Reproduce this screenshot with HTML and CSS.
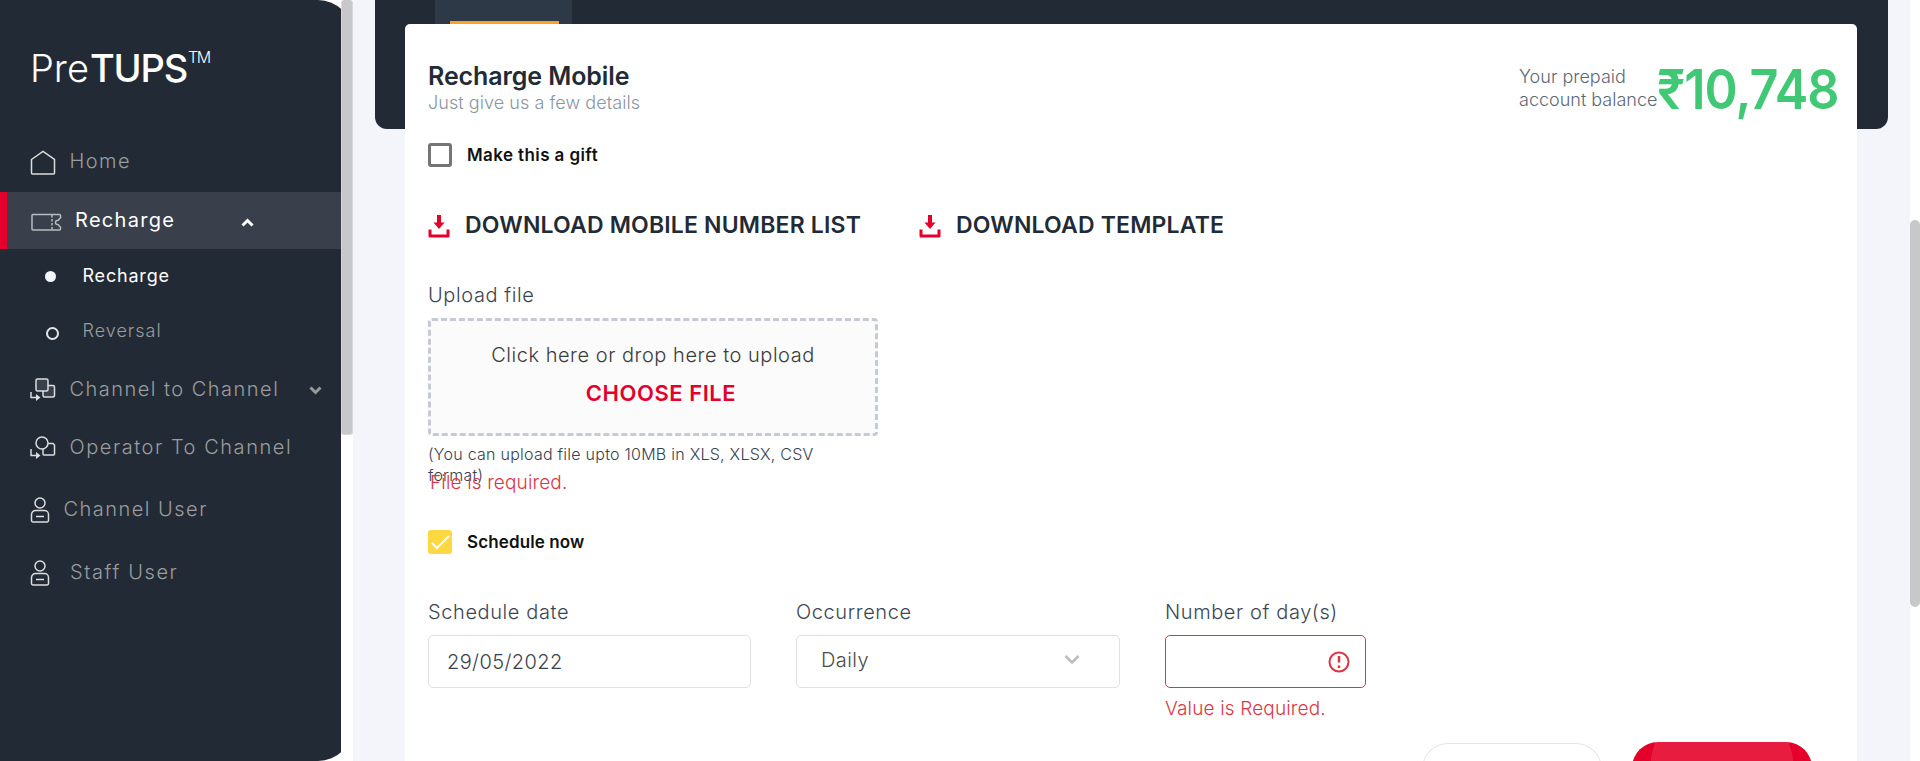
FILE: index.html
```html
<!DOCTYPE html>
<html lang="en">
<head>
<meta charset="utf-8">
<title>PreTUPS</title>
<link rel="stylesheet" href="styles.css">
</head>
<body>
<div class="app">
  <aside class="sidebar">
    <div class="panel">
      <div class="logo"><span class="logo-light">Pre</span><span class="logo-bold">TUPS</span><span class="logo-tm">TM</span></div>
      <nav class="nav">
        <a class="item home">
          <svg class="icon" width="26" height="26" viewBox="0 0 26 26"><path d="M1.5 9.5 13 1.5l11.500 8V23a1 1 0 0 1-1 1h-21a1 1 0 0 1-1-1z"/></svg>
          <span>Home</span>
        </a>
        <a class="item open">
          <svg class="icon" width="32" height="19" viewBox="0 0 32 19"><path d="M2 1.500h26.500a1 1 0 0 1 1 1v2.500l-1.500 1.200a1.500 1.500 0 0 1-1.500 1.300 2 2 0 0 0 0 4 1.500 1.500 0 0 1 1.500 1.300l1.500 1.200v2a1 1 0 0 1-1 1H2a1 1 0 0 1-1-1v-13.500a1 1 0 0 1 1-1z"/><path d="M21 2v15" stroke-dasharray="2.500 1.500"/></svg>
          <span>Recharge</span>
          <svg class="arrow up" width="13" height="9" viewBox="0 0 13 9"><path d="M1.500 7.500l5-5 5 5"/></svg>
        </a>
        <a class="item sub active"><i class="dot"></i><span>Recharge</span></a>
        <a class="item sub rev"><i class="ring"></i><span>Reversal</span></a>
        <a class="item c2c">
          <svg class="icon" width="26" height="24" viewBox="0 0 26 24"><rect class="tint" x="13" y="7.500" width="11.500" height="11.500" rx="1.500"/><rect class="tint" x="6" y="1" width="12" height="12" rx="1.500"/><path d="M1 14v5.500h7"/><path class="solid" d="M6 16l4.500 3.500L6 23z"/></svg>
          <span>Channel to Channel</span>
          <svg class="arrow down" width="13" height="9" viewBox="0 0 13 9"><path d="M1.500 1.500l5 5 5-5"/></svg>
        </a>
        <a class="item o2c">
          <svg class="icon" width="26" height="24" viewBox="0 0 26 24"><path d="M18 7.500h5l1.500 1.500v9a1 1 0 0 1-1 1h-9.500a1 1 0 0 1-1-1v-5"/><circle cx="12" cy="7" r="6"/><path d="M1 13v6.500h7"/><path class="solid" d="M6 16l4.500 3.500L6 23z"/></svg>
          <span>Operator To Channel</span>
        </a>
        <a class="item chu">
          <svg class="icon" width="21" height="27" viewBox="0 0 21 27"><circle cx="10" cy="6" r="5"/><path d="M5.500 13.500h9a4 4 0 0 1 4 4v6a1.500 1.500 0 0 1-1.500 1.500H3a1.500 1.500 0 0 1-1.500-1.500v-6a4 4 0 0 1 4-4zM6 19.500h8"/></svg>
          <span>Channel User</span>
        </a>
        <a class="item stu">
          <svg class="icon" width="21" height="27" viewBox="0 0 21 27"><circle cx="10" cy="6" r="5"/><path d="M5.500 13.500h9a4 4 0 0 1 4 4v6a1.500 1.500 0 0 1-1.500 1.500H3a1.500 1.500 0 0 1-1.500-1.500v-6a4 4 0 0 1 4-4zM6 19.500h8"/></svg>
          <span>Staff User</span>
        </a>
      </nav>
    </div>
    <div class="side-scroll"><div class="side-thumb"></div></div>
  </aside>
  <main class="main">
    <div class="banner"><div class="tab"><div class="tab-line"></div></div></div>
    <section class="card">
      <header class="head">
        <div class="titles">
          <h1 class="title">Recharge Mobile</h1>
          <p class="subtitle">Just give us a few details</p>
        </div>
        <div class="balance">
          <div class="balance-label">Your prepaid<br>account balance</div>
          <div class="amount">₹10,748</div>
        </div>
      </header>
      <label class="check gift"><span class="box"></span><span>Make this a gift</span></label>
      <div class="downloads">
        <a class="dl first"><svg width="22" height="24" viewBox="0 0 22 24"><path d="M9 0h4v7.500h3.500L11 14 5.500 7.500H9z"/><path class="tray" d="M2 14.500v6.500h18v-6.500"/></svg><span>DOWNLOAD MOBILE NUMBER LIST</span></a>
        <a class="dl"><svg width="22" height="24" viewBox="0 0 22 24"><path d="M9 0h4v7.500h3.500L11 14 5.500 7.500H9z"/><path class="tray" d="M2 14.500v6.500h18v-6.500"/></svg><span>DOWNLOAD TEMPLATE</span></a>
      </div>
      <div class="label upload-label">Upload file</div>
      <div class="drop">
        <div class="drop-text">Click here or drop here to upload</div>
        <div class="choose">CHOOSE FILE</div>
      </div>
      <div class="note">(You can upload file upto 10MB in XLS, XLSX, CSV<br>format)</div>
      <div class="error file-error">File is required.</div>
      <label class="check sched"><span class="box on"><svg width="24" height="24" viewBox="0 0 24 24"><path d="M4 13l5 5L21 6"/></svg></span><span>Schedule now</span></label>
      <div class="fields">
        <div class="field"><div class="label">Schedule date</div><div class="input date">29/05/2022</div></div>
        <div class="field occurrence"><div class="label">Occurrence</div><div class="input select"><span>Daily</span><svg width="16" height="11" viewBox="0 0 16 11"><path d="M1.500 2l6.500 6.500L14.500 2"/></svg></div></div>
        <div class="field days"><div class="label">Number of day(s)</div><div class="input invalid"><svg width="22" height="22" viewBox="0 0 22 22"><circle cx="11" cy="11" r="9.500"/><path class="mark" d="M11 5v6.500M11 14.500v2.500"/></svg></div><div class="error">Value is Required.</div></div>
      </div>
      <div class="actions"><div class="btn ghost"></div><div class="btn primary"></div></div>
    </section>
  </main>
  <div class="page-scroll"><div class="page-thumb"></div></div>
</div>
</body>
</html>
```
FILE: styles.css
```css
* { box-sizing: border-box; }
html, body { margin: 0; height: 100%; overflow: hidden; }
body { font-family: Inter, "Noto Sans", sans-serif; background: #f4f5fa; color: #222b35; }
.app { display: flex; width: 1920px; height: 761px; overflow: hidden; }

/* Sidebar */
.sidebar { flex: none; width: 353px; height: 761px; display: grid; background: #fff; }
.panel, .side-scroll { grid-area: 1 / 1; }
.panel { background: #222b35; border-radius: 0 35px 35px 0; }
.side-scroll { justify-self: end; width: 12px; background: #fff; }
.side-thumb { height: 435px; background: #c8c8ca; border-radius: 3px; border: 1px solid #d8d8d8; border-top: 0; }
.logo { display: flex; height: 130px; padding: 47px 0 0 30px; color: #fff; font-size: 38px; line-height: 42px; }
.logo-light { font-weight: 300; }
.logo-bold { font-weight: 500; letter-spacing: -1.2px; margin-left: 1px; }
.logo-tm { font-size: 16px; line-height: 20px; font-weight: 300; letter-spacing: -1.5px; margin-left: 1px; }
.item { display: flex; align-items: center; padding-left: 30px; height: 60px; color: #9b9c9e; font-size: 20px; font-weight: 300; letter-spacing: 1.48px; line-height: 24px; white-space: nowrap; }
.icon { flex: none; fill: none; stroke: #dcdddd; stroke-width: 1.500; }
.icon .tint { fill: #39404b; }
.icon .solid { fill: #dcdddd; stroke: none; }
.arrow { fill: none; stroke-width: 3; }
.home { height: 62px; }
.home .icon { margin: 4px 13.500px 0 0; }
.open { height: 57px; background: #393f4b; border-left: 7px solid #e4002b; padding: 0 0 2px 23px; color: #fff; font-weight: 400; letter-spacing: 1.3px; }
.open .icon { margin: 5px 12px 0 1px; stroke: #b9bcc0; }
.up { stroke: #fff; margin-left: 66px; margin-top: 5px; }
.sub { font-size: 18px; letter-spacing: 1px; }
.active { height: 54px; color: #fff; font-weight: 400; letter-spacing: 0.8px; }
.dot { width: 11px; height: 11px; border-radius: 50%; background: #f4f5fa; margin: 0 26.500px 0 15px; }
.rev { height: 56px; }
.ring { width: 13px; height: 13px; border-radius: 50%; border: 2px solid #e4e5e8; margin: 4px 23.500px 0 16px; }
.c2c { height: 59px; }
.c2c .icon, .o2c .icon { margin: 2px 13.500px 0 0; }
.down { stroke: #97999c; margin-left: 30px; margin-top: 3px; }
.o2c { height: 58px; letter-spacing: 1.55px; }
.chu { height: 65px; }
.chu .icon { margin: 4px 12.500px 0 0; }
.stu { height: 61px; letter-spacing: 1.6px; }
.stu .icon { margin: 4px 19px 0 0; }

/* Main */
.main { width: 1557px; height: 761px; display: grid; align-items: start; }
.banner, .card { grid-area: 1 / 1; }
.banner { margin-left: 22px; width: 1513px; height: 129px; padding-left: 60px; background: #222b35; border-radius: 0 0 12px 12px; }
.tab { width: 137px; height: 24px; padding: 21px 13px 0 15px; background: #2e3947; }
.tab-line { height: 3px; background: #ffa21f; }
.card { margin: 24px 0 0 52px; width: 1452px; height: 737px; padding-left: 23px; background: #fff; border-radius: 5px 5px 0 0; overflow: hidden; }
.head { display: flex; justify-content: space-between; height: 119px; padding: 36px 18px 0 0; }
.title { margin: 0; font-size: 25px; font-weight: 600; line-height: 32px; letter-spacing: -0.1px; }
.subtitle { margin: 0; font-size: 18px; line-height: 22px; color: #8895a3; font-weight: 300; letter-spacing: 0.06px; }
.balance { display: flex; align-items: flex-start; white-space: nowrap; }
.balance-label { margin-top: 5px; font-size: 18px; line-height: 23px; color: #5c6974; font-weight: 300; }
.amount { margin-left: -17px; font-size: 55px; line-height: 58px; font-weight: 600; letter-spacing: -1px; color: #40c875; transform: scaleX(0.915); transform-origin: right; }
.check { display: flex; align-items: center; height: 24px; gap: 15px; font-size: 17px; font-weight: 600; color: #111; }
.gift { letter-spacing: 0.4px; }
.sched { letter-spacing: 0.12px; }
.box { width: 24px; height: 24px; border: 3px solid #757575; border-radius: 3px; }
.box.on { border: 0; background: #ffd740; }
.box svg { display: block; fill: none; stroke: #fff; stroke-width: 2; }
.downloads { display: flex; margin-top: 42px; height: 32px; }
.dl { display: flex; font-size: 23px; line-height: 32px; font-weight: 600; letter-spacing: 0.18px; }
.dl svg { margin: 6px 15px 0 0; fill: #e4002b; }
.dl .tray { fill: none; stroke: #e4002b; stroke-width: 3; stroke-linejoin: round; }
.first { width: 491px; }
.label { font-size: 20px; line-height: 28px; letter-spacing: 0.6px; color: #3b4653; font-weight: 300; white-space: nowrap; }
.upload-label { margin-top: 40px; height: 37px; }
.drop { width: 450px; height: 118px; border: 3px dashed #c6cad6; border-radius: 4px; background: #fbfbfb; text-align: center; }
.drop-text { margin-top: 18px; font-size: 20px; line-height: 32px; font-weight: 300; letter-spacing: 0.53px; color: #3c3c3c; }
.choose { margin-top: 6px; padding-left: 16px; font-size: 22px; line-height: 32px; font-weight: 600; letter-spacing: 0.55px; color: #e4002b; }
.note { margin-top: 8px; font-size: 16px; line-height: 21px; font-weight: 300; letter-spacing: 0.25px; color: #364150; height: 28px; }
.error { font-size: 19px; line-height: 22px; font-weight: 300; letter-spacing: 0.15px; color: #dc3545; }
.file-error { padding-left: 2px; height: 58px; }
.fields { display: flex; gap: 45px; margin-top: 44px; height: 144px; }
.field { width: 323px; }
.occurrence { width: 324px; }
.days { width: 201px; }
.input { display: flex; align-items: center; height: 53px; margin-top: 9px; border: 1px solid #dfe1e5; border-radius: 5px; font-size: 20px; font-weight: 300; letter-spacing: 0.4px; color: #3a424d; }
.date { padding-left: 18px; }
.select { padding: 0 39px 4px 24px; justify-content: space-between; color: #4a4a4a; }
.select svg { fill: none; stroke: #bdbdbd; stroke-width: 2.500; }
.invalid { border-color: #dc3545; justify-content: flex-end; padding: 1px 15px 0 0; margin-bottom: 10px; }
.invalid svg { fill: none; stroke: #dc3545; stroke-width: 2; }
.invalid .mark { stroke-width: 2.500; }
.actions { display: flex; gap: 30px; padding-left: 994px; }
.btn { width: 180px; height: 52px; border-radius: 26px; }
.ghost { border: 1px solid #e2e4e8; margin-top: 1px; }
.primary { background: radial-gradient(circle 72px at 90px 27px, #e81c3f 99%, #e4002b 100%); }

/* Page scrollbar */
.page-scroll { width: 10px; height: 761px; background: #fff; padding-top: 220px; }
.page-thumb { height: 387px; border-radius: 5px; background: #c8c8ca; }
```
